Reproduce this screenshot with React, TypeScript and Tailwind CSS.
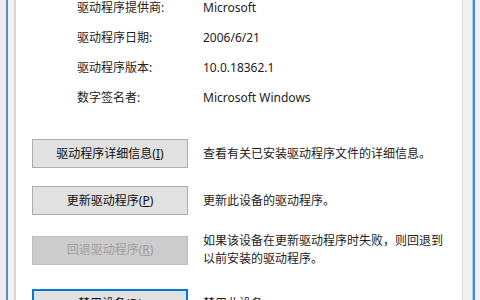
import React from "react";

const font = {
  fontFamily: '"Segoe UI", "Noto Sans", "Noto Sans CJK SC", sans-serif',
};

const infoRows = [
  { label: "驱动程序提供商:", value: "Microsoft" },
  { label: "驱动程序日期:", value: "2006/6/21" },
  { label: "驱动程序版本:", value: "10.0.18362.1" },
  { label: "数字签名者:", value: "Microsoft Windows" },
];

const ActionRow = ({
  label,
  hotkey,
  disabled,
  focused,
  className,
  children,
}: {
  label: string;
  hotkey: string;
  disabled?: boolean;
  focused?: boolean;
  className?: string;
  children: React.ReactNode;
}) => (
  <div className={`flex items-center ${className ?? ""}`}>
    <button
      className={`w-[156px] h-[29px] shrink-0 flex items-center justify-center text-[12px] ${
        disabled
          ? "bg-[#cccccc] border border-[#bfbfbf] text-[#a0a0a0]"
          : focused
          ? "bg-[#e1e1e1] border-2 border-[#0078d7] text-[#111]"
          : "bg-[#e1e1e1] border border-[#adadad] text-[#111]"
      }`}
    >
      {label}(<u>{hotkey}</u>)
    </button>
    <div className="ml-[15px] text-[12px] leading-[18px] text-[#222]">
      {children}
    </div>
  </div>
);

export default function App() {
  return (
    <div className="w-[480px] h-[300px] overflow-hidden flex" style={font}>
      {/* left window frame */}
      <div className="w-[6px] bg-[#efebf1]" />
      <div className="w-[2px] bg-[#5a8bcb]" />
      <div className="w-[6px] bg-[#f3f3f7]" />
      <div className="w-[2px] bg-[#d6d6de]" />

      <div className="flex-1 bg-white pl-[16px]">
        <div className="-mt-[7px] ml-[45px]">
          {infoRows.map((r) => (
            <div key={r.label} className="flex items-center h-[30px] text-[12px] text-[#222]">
              <div className="w-[126px]">{r.label}</div>
              <div>{r.value}</div>
            </div>
          ))}
        </div>

        <div className="flex flex-col">
          <ActionRow label="驱动程序详细信息" hotkey="I" className="mt-[26px]">
            查看有关已安装驱动程序文件的详细信息。
          </ActionRow>
          <ActionRow label="更新驱动程序" hotkey="P" className="mt-[18px]">
            更新此设备的驱动程序。
          </ActionRow>
          <ActionRow label="回退驱动程序" hotkey="R" disabled className="mt-[17px]">
            <div>如果该设备在更新驱动程序时失败，则回退到</div>
            <div>以前安装的驱动程序。</div>
          </ActionRow>
          <ActionRow label="禁用设备" hotkey="D" focused className="mt-[21px]">
            禁用此设备。
          </ActionRow>
        </div>
      </div>

      {/* right window frame */}
      <div className="w-[1px] bg-[#d9d9d9]" />
      <div className="w-[9px] bg-[#f0f0f0]" />
      <div className="w-[1px] bg-[#a9cdf0]" />
      <div className="w-[2px] bg-[#4b86cf]" />
      <div className="w-[5px] bg-[#eef2f8]" />
    </div>
  );
}
